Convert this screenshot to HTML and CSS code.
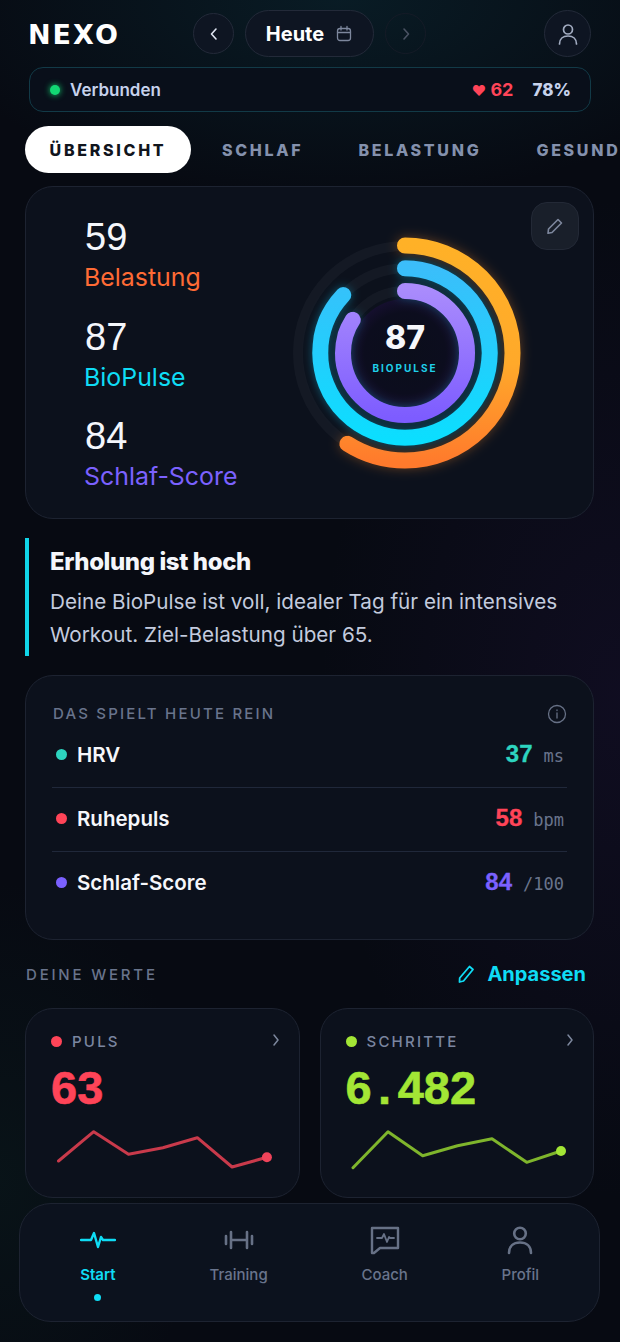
FILE: index.html
```html
<!DOCTYPE html>
<html lang="de">
<head>
  <meta charset="utf-8">
  <title>NEXO</title>
  <link rel="stylesheet" href="styles.css">
</head>
<body>
<div class="app">

  <header class="topbar">
    <div class="logo">NEXO</div>
    <div class="day-nav">
      <button class="round-btn">
        <svg width="16" height="16" viewBox="0 0 16 16"><path d="M10 3 5.500 8l4.500 5" class="ic" stroke="#dfe5f2" stroke-width="1.600"/></svg>
      </button>
      <button class="day-pill">
        <span>Heute</span>
        <svg width="18" height="18" viewBox="0 0 18 18"><g class="ic" stroke="#7d879d" stroke-width="1.300"><rect x="2.500" y="3.500" width="13" height="12" rx="2.500"/><path d="M2.500 7.500h13M6 1.500v3.500M12 1.500v3.500"/></g></svg>
      </button>
      <button class="round-btn round-btn-off">
        <svg width="16" height="16" viewBox="0 0 16 16"><path d="M6 3l4.500 5L6 13" class="ic" stroke="#4a5263" stroke-width="1.600"/></svg>
      </button>
    </div>
    <button class="profile-btn">
      <svg width="24" height="24" viewBox="0 0 24 24"><g class="ic" stroke="#a3adc2" stroke-width="1.700"><circle cx="12" cy="7.500" r="4.500"/><path d="M3.500 22c0-5 3.500-8 8.500-8s8.500 3 8.500 8"/></g></svg>
    </button>
  </header>

  <div class="status">
    <span class="status-dot"></span>
    <span class="status-text">Verbunden</span>
    <span class="status-hr"><i>♥</i> 62</span>
    <span class="status-batt">78%</span>
  </div>

  <nav class="tabs">
    <a class="tab tab-on">ÜBERSICHT</a>
    <a class="tab">SCHLAF</a>
    <a class="tab">BELASTUNG</a>
    <a class="tab">GESUNDHEIT</a>
  </nav>

  <section class="card rings-card">
    <div class="scores">
      <div class="score"><b>59</b><span class="c-load">Belastung</span></div>
      <div class="score"><b>87</b><span class="c-bio">BioPulse</span></div>
      <div class="score"><b>84</b><span class="c-sleep">Schlaf-Score</span></div>
    </div>
    <button class="edit-btn">
      <svg width="20" height="20" viewBox="0 0 20 20"><path d="M13 3.500l3.500 3.500L7 16.500l-4 .8.500-4.300z" class="ic" stroke="#7d879d" stroke-width="1.600"/></svg>
    </button>
    <div class="rings">
      <svg width="240" height="240" viewBox="0 0 240 240">
        <defs>
          <!-- arcs are rotated -90deg, so their local x axis points up the screen -->
          <linearGradient id="g-load" gradientUnits="userSpaceOnUse" x1="230" y1="0" x2="10" y2="0"><stop offset="0" stop-color="#ffb127"/><stop offset=".55" stop-color="#ffa92a"/><stop offset="1" stop-color="#ff7a2c"/></linearGradient>
          <linearGradient id="g-bio" gradientUnits="userSpaceOnUse" x1="210" y1="0" x2="30" y2="0"><stop offset="0" stop-color="#3cbdfa"/><stop offset="1" stop-color="#0adfff"/></linearGradient>
          <linearGradient id="g-sleep" gradientUnits="userSpaceOnUse" x1="185" y1="0" x2="55" y2="0"><stop offset="0" stop-color="#aa8cfc"/><stop offset="1" stop-color="#7d5cff"/></linearGradient>
          <radialGradient id="g-core"><stop offset="0" stop-color="#0b0e1b"/><stop offset=".75" stop-color="#0c0d1e"/><stop offset="1" stop-color="#150f2e"/></radialGradient>
        </defs>
        <circle cx="120" cy="120" r="54" fill="url(#g-core)"/>
        <circle cx="120" cy="120" r="107" class="track"/>
        <circle cx="120" cy="120" r="84.700" class="track"/>
        <circle cx="120" cy="120" r="62" class="track"/>
        <circle cx="120" cy="120" r="107.500" pathLength="100" stroke-dasharray="59 100" transform="rotate(-90 120 120)" class="arc arc-load"/>
        <circle cx="120" cy="120" r="84.700" pathLength="100" stroke-dasharray="87 100" transform="rotate(-90 120 120)" class="arc arc-bio"/>
        <circle cx="120" cy="120" r="62" pathLength="100" stroke-dasharray="84 100" transform="rotate(-90 120 120)" class="arc arc-sleep"/>
      </svg>
      <div class="rings-label">
        <b>87</b>
        <span>BIOPULSE</span>
      </div>
    </div>
  </section>

  <section class="insight">
    <h2>Erholung ist hoch</h2>
    <p>Deine BioPulse ist voll, idealer Tag für ein intensives Workout. Ziel-Belastung über 65.</p>
  </section>

  <section class="card factors">
    <div class="factors-head">
      <span class="caps">DAS SPIELT HEUTE REIN</span>
      <svg width="20" height="20" viewBox="0 0 20 20"><g class="ic" stroke="#677186" stroke-width="1.300"><circle cx="10" cy="10" r="8.500"/><path d="M10 9v5M10 6v.6"/></g></svg>
    </div>
    <div class="factor">
      <span class="dot bg-teal"></span><span class="factor-name">HRV</span>
      <span class="factor-val c-teal">37</span><span class="factor-unit">ms</span>
    </div>
    <div class="factor">
      <span class="dot bg-red"></span><span class="factor-name">Ruhepuls</span>
      <span class="factor-val c-red">58</span><span class="factor-unit">bpm</span>
    </div>
    <div class="factor">
      <span class="dot bg-violet"></span><span class="factor-name">Schlaf-Score</span>
      <span class="factor-val c-violet">84</span><span class="factor-unit">/100</span>
    </div>
  </section>

  <div class="values-head">
    <span class="caps caps-wide">DEINE WERTE</span>
    <a class="adjust">
      <svg width="20" height="20" viewBox="0 0 20 20"><path d="M13.500 2.500l3.500 3L7.500 17l-4 1 .2-4z" class="ic" stroke="#0fdcf5" stroke-width="1.800"/></svg>
      Anpassen
    </a>
  </div>

  <div class="stats">
    <div class="card stat">
      <div class="stat-head">
        <span class="dot bg-red"></span><span class="caps">PULS</span>
        <svg class="stat-more" width="12" height="14" viewBox="0 0 12 14"><path d="M4 2l4 5-4 5" class="ic" stroke="#7d879d" stroke-width="1.500"/></svg>
      </div>
      <div class="stat-val c-red">63</div>
      <svg class="spark" width="224" height="50" viewBox="0 0 224 50">
        <polyline points="7.500,41 42.700,11.700 77.500,34.300 111.900,27.700 146.300,17.700 181.100,47 215.900,37.300" class="spark-line" stroke="#c93a4b"/>
        <circle cx="215.900" cy="37.300" r="5" fill="#f0435a"/>
      </svg>
    </div>
    <div class="card stat">
      <div class="stat-head">
        <span class="dot bg-lime"></span><span class="caps">SCHRITTE</span>
        <svg class="stat-more" width="12" height="14" viewBox="0 0 12 14"><path d="M4 2l4 5-4 5" class="ic" stroke="#7d879d" stroke-width="1.500"/></svg>
      </div>
      <div class="stat-val c-lime">6<span class="stat-sep">.</span>482</div>
      <svg class="spark" width="224" height="50" viewBox="0 0 224 50">
        <polyline points="7,47.700 42,11.700 76.700,35.700 111.500,25.700 146,18.700 180.700,42.300 215,31" class="spark-line" stroke="#7fb52c"/>
        <circle cx="215" cy="31" r="5" fill="#a3e635"/>
      </svg>
    </div>
  </div>

  <nav class="bottom-nav">
    <a class="nav-item nav-on">
      <svg width="36" height="26" viewBox="0 0 36 26"><path d="M1 13h10l3-7 4 14 3-10 2 3h12" class="ic" stroke="#0fdcf5" stroke-width="2.400"/></svg>
      <span>Start</span>
      <i class="nav-dot"></i>
    </a>
    <a class="nav-item">
      <svg width="30" height="26" viewBox="0 0 30 26"><g class="ic" stroke="#677186" stroke-width="2.600"><path d="M2 9v8M7 5v16M23 5v16M28 9v8M7 13h16"/></g></svg>
      <span>Training</span>
    </a>
    <a class="nav-item">
      <svg width="30" height="28" viewBox="0 0 30 28"><g class="ic" stroke="#677186" stroke-width="2.400"><path d="M2 2h26v20H10l-6 5H2z"/><path d="M7 12h5l2-4 3 8 2-5 1 1h4" stroke-width="1.800"/></g></svg>
      <span>Coach</span>
    </a>
    <a class="nav-item">
      <svg width="28" height="28" viewBox="0 0 28 28"><g class="ic" stroke="#677186" stroke-width="2.600"><circle cx="14" cy="7.500" r="5.800"/><path d="M3 27c0-7 4.500-10.500 11-10.500S25 20 25 27"/></g></svg>
      <span>Profil</span>
    </a>
  </nav>

</div>
</body>
</html>
```

FILE: styles.css
```css
* {
  box-sizing: border-box;
}

html, body {
  margin: 0;
  height: 100%;
}

body {
  font-family: Inter, "Liberation Sans", sans-serif;
  color: #fff;
  background: #070a12;
}

a {
  display: block;
}

button {
  font-family: inherit;
  color: inherit;
  padding: 0;
}

h2, p {
  margin: 0;
}

.ic {
  fill: none;
  stroke-linecap: round;
  stroke-linejoin: round;
}

.app {
  position: relative;
  width: 620px;
  height: 1342px;
  overflow: hidden;
  padding: 10px 25px 0;
  background:
    radial-gradient(420px 200px at 55% 0, rgba(12, 60, 72, .35), transparent),
    radial-gradient(300px 500px at 100% 52%, rgba(50, 25, 90, .2), transparent),
    radial-gradient(200px 300px at 0 88%, rgba(15, 60, 50, .18), transparent),
    #070a12;
}

/* header */
.topbar {
  display: flex;
  align-items: center;
  height: 47px;
  padding: 0 4px;
}

.logo {
  width: 165px;
  margin-left: -1px;
  padding-top: 2px;
  font-family: "DejaVu Sans", sans-serif;
  font-size: 27px;
  font-weight: 700;
  letter-spacing: 2px;
  line-height: 47px;
}

.day-nav {
  display: flex;
  align-items: center;
  gap: 11px;
}

.round-btn {
  display: flex;
  align-items: center;
  justify-content: center;
  width: 41px;
  height: 41px;
  border-radius: 50%;
  background: #0e1522;
  border: 1px solid #232a39;
}

.round-btn-off {
  background: transparent;
  border-color: #151b27;
}

.day-pill {
  display: flex;
  align-items: center;
  justify-content: center;
  gap: 11px;
  width: 129px;
  height: 47px;
  border-radius: 24px;
  background: #0e1522;
  border: 1px solid #232a39;
  font-size: 20px;
  font-weight: 700;
}

.profile-btn {
  display: flex;
  align-items: center;
  justify-content: center;
  width: 47px;
  height: 47px;
  margin-left: auto;
  border-radius: 50%;
  background: #0e1522;
  border: 1px solid #232a39;
}

.status {
  display: flex;
  align-items: center;
  height: 45px;
  margin: 10px 4px 0;
  padding: 0 19px 0 20px;
  border-radius: 14px;
  border: 1px solid #123a47;
  background: #090f1a;
}

.status-dot {
  width: 10px;
  height: 10px;
  border-radius: 50%;
  background: #12d873;
  box-shadow: 0 0 6px #12d873;
}

.status-text {
  margin-left: 10px;
  font-size: 17px;
  font-weight: 600;
  color: #c6d2ec;
}

.status-hr {
  margin-left: auto;
  font-size: 18px;
  font-weight: 700;
  color: #ff4458;
}

.status-hr i {
  font-style: normal;
  font-size: 14px;
}

.status-batt {
  margin-left: 19px;
  font-size: 17px;
  font-weight: 800;
  color: #c6d2ec;
}

.tabs {
  display: flex;
  align-items: center;
  gap: 5px;
  height: 47px;
  margin-top: 14px;
  white-space: nowrap;
}

.tab {
  flex: none;
  padding: 0 24px 0 26px;
  font-size: 16px;
  font-weight: 800;
  letter-spacing: 2.700px;
  color: #8491ad;
}

.tab-on {
  display: flex;
  align-items: center;
  justify-content: center;
  width: 166px;
  height: 47px;
  padding: 0;
  border-radius: 24px;
  background: #fff;
  color: #11151d;
}

/* cards */
.card {
  border: 1px solid #1d2331;
  background: #0c111c;
  border-radius: 28px;
}

.rings-card {
  position: relative;
  width: 569px;
  height: 333px;
  margin-top: 13px;
}

.scores {
  padding: 28px 0 0 59px;
}

.score {
  height: 99.500px;
}

.score b {
  display: block;
  font-family: "Liberation Sans", sans-serif;
  font-size: 38px;
  font-weight: 400;
  line-height: 44px;
  color: #f4f6fb;
}

.score span {
  display: block;
  margin-left: -1px;
  font-size: 24.900px;
  line-height: 36px;
}

.c-load { color: #ff6b35; }
.c-bio { color: #0fdcf5; }
.c-sleep { color: #7b61ff; }
.c-teal { color: #2dd4bf; }
.c-red { color: #ff4458; }
.c-violet { color: #7b61ff; }
.c-lime { color: #a3e635; }
.bg-teal { background: #2dd4bf; }
.bg-red { background: #ff4458; }
.bg-violet { background: #7b61ff; }
.bg-lime { background: #a3e635; }

.edit-btn {
  position: absolute;
  top: 15px;
  right: 14px;
  display: flex;
  align-items: center;
  justify-content: center;
  width: 48px;
  height: 48px;
  border-radius: 16px;
  background: #191f2a;
  border: 1px solid #232936;
}

.rings {
  position: absolute;
  left: 259px;
  top: 46px;
  width: 240px;
  height: 240px;
}

.rings svg {
  display: block;
  overflow: visible;
}

.track {
  fill: none;
  stroke: rgba(255, 255, 255, .035);
  stroke-width: 10;
}

.arc {
  fill: none;
  stroke-width: 16;
  stroke-linecap: round;
}

.arc-load {
  stroke: url(#g-load);
  filter: drop-shadow(0 0 6px rgba(255, 140, 40, .35));
}

.arc-bio {
  stroke: url(#g-bio);
  filter: drop-shadow(0 0 5px rgba(15, 200, 245, .4));
}

.arc-sleep {
  stroke: url(#g-sleep);
  filter: drop-shadow(0 0 5px rgba(30, 200, 245, .3));
}

.rings-label {
  position: absolute;
  left: 0;
  right: 0;
  top: 87px;
  text-align: center;
}

.rings-label b {
  display: block;
  font-size: 32px;
  font-weight: 800;
  line-height: 36px;
  color: #f6f7fb;
}

.rings-label span {
  display: block;
  margin-top: 6px;
  font-size: 10px;
  font-weight: 700;
  letter-spacing: 2px;
  color: #1fd0ea;
}

.insight {
  height: 118px;
  margin-top: 19px;
  padding: 9px 0 0 21px;
  border-left: 4px solid #10d5e8;
}

.insight h2 {
  font-size: 24px;
  font-weight: 800;
  line-height: 30px;
  letter-spacing: -.4px;
  color: #f4f6fb;
}

.insight p {
  margin-top: 8px;
  font-size: 20.700px;
  line-height: 33px;
  color: #c3cbde;
}

.factors {
  width: 569px;
  height: 265px;
  margin-top: 19px;
  padding: 27px 26px 0 27px;
}

.caps {
  font-size: 15px;
  font-weight: 500;
  letter-spacing: 2.200px;
  color: #69748c;
}

.caps-wide {
  letter-spacing: 2.800px;
}

.factors-head {
  display: flex;
  align-items: center;
  justify-content: space-between;
  height: 21px;
}

.factor {
  display: flex;
  align-items: baseline;
  height: 64px;
  margin-left: -1px;
  padding: 16px 3px 0 4px;
  border-bottom: 1px solid #20283a;
}

.factor:last-child {
  border-bottom: 0;
}

.dot {
  flex: none;
  width: 11px;
  height: 11px;
  border-radius: 50%;
  align-self: center;
}

.factor .dot {
  align-self: flex-start;
  margin-top: 9px;
}

.factor-name {
  margin-left: 10px;
  font-size: 20.500px;
  font-weight: 600;
  color: #f6f7fb;
}

.factor-val {
  margin-left: auto;
  font-family: "Liberation Sans", sans-serif;
  font-size: 24px;
  font-weight: 700;
  -webkit-text-stroke: .3px currentColor;
}

.factor-unit {
  margin-left: 11px;
  font-family: "DejaVu Sans Mono", monospace;
  font-size: 17px;
  color: #69748c;
}

.values-head {
  display: flex;
  align-items: center;
  justify-content: space-between;
  height: 24px;
  margin-top: 22px;
  padding: 0 9px 0 1px;
}

.adjust {
  display: flex;
  align-items: center;
  gap: 11px;
  font-size: 20px;
  font-weight: 700;
  color: #0fdcf5;
}

.stats {
  display: flex;
  gap: 20px;
  width: 569px;
  margin-top: 22px;
}

.stat {
  flex: 1 1 0;
  min-width: 0;
  height: 190px;
  padding: 22px 20px 0 25px;
}

.stat-head {
  display: flex;
  align-items: center;
  gap: 10px;
  height: 20px;
}

.stat-head .caps {
  color: #7b86a0;
}

.stat-more {
  margin: -2px -3px 0 auto;
}

.stat-val {
  margin-top: 9px;
  font-family: "Liberation Sans", sans-serif;
  font-size: 47px;
  font-weight: 700;
  line-height: 56px;
  -webkit-text-stroke: .6px currentColor;
}

/* the dot takes a full digit cell, as in a tabular font */
.stat-sep {
  display: inline-block;
  width: 26px;
  text-align: center;
}

.spark {
  display: block;
  margin-top: 4px;
  overflow: visible;
}

.spark-line {
  fill: none;
  stroke-width: 3;
  stroke-linejoin: round;
  stroke-linecap: round;
}

.bottom-nav {
  position: absolute;
  left: 19px;
  top: 1203px;
  display: flex;
  justify-content: space-around;
  align-items: flex-start;
  width: 581px;
  height: 119px;
  padding: 20px 13px 0;
  border: 1px solid #1d2331;
  border-radius: 32px;
  background: #0c121e;
}

.nav-item {
  display: flex;
  flex-direction: column;
  align-items: center;
  font-size: 15px;
  font-weight: 500;
  color: #69748c;
}

.nav-item svg {
  display: block;
  height: 32px;
}

.nav-item span {
  margin-top: 9px;
  line-height: 20px;
}

.nav-on {
  color: #0fdcf5;
  font-weight: 600;
}

.nav-dot {
  width: 7px;
  height: 7px;
  margin-top: 9px;
  border-radius: 50%;
  background: #0fdcf5;
}
```
